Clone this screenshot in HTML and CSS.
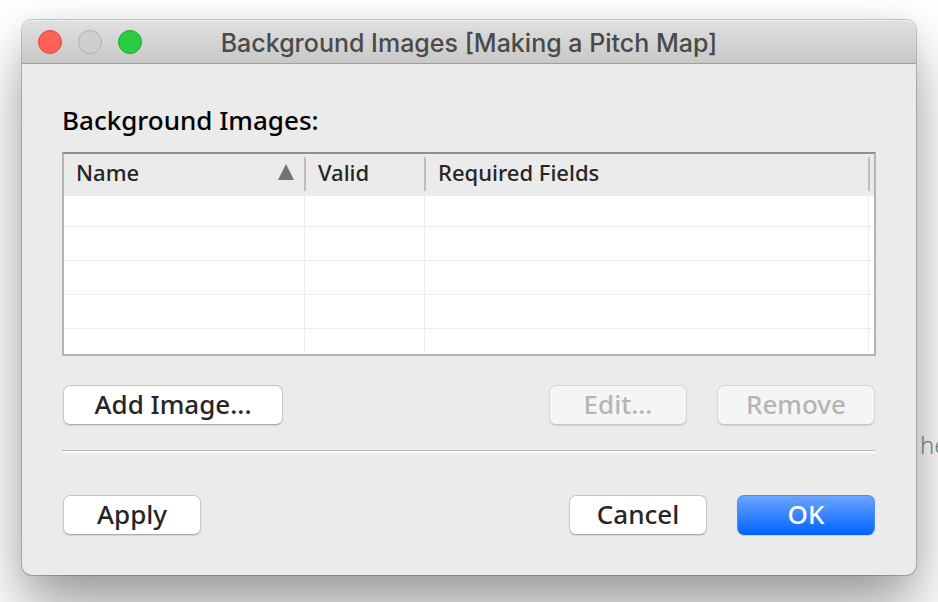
FILE: index.html
```html
<!DOCTYPE html>
<html lang="en">
<head>
    <meta charset="UTF-8">
    <meta name="viewport" content="width=device-width, initial-scale=1.0">
    <title>Background Images [Making a Pitch Map]</title>
    <link rel="stylesheet" href="styles.css">
</head>
<body>
    <div class="behind">he</div>
    <main class="window">
        <header class="titlebar">
            <div class="lights">
                <button class="light close" aria-label="Close"></button>
                <button class="light minimize" aria-label="Minimize" disabled></button>
                <button class="light zoom" aria-label="Zoom"></button>
            </div>
            <h1>Background Images [Making a Pitch Map]</h1>
        </header>
        <div class="content">
            <h2 id="images-label">Background Images:</h2>
            <table class="images" aria-labelledby="images-label">
                <colgroup>
                    <col class="col-name">
                    <col class="col-valid">
                    <col>
                    <col class="col-end">
                </colgroup>
                <thead>
                    <tr>
                        <th aria-sort="ascending">
                            <div class="head">Name
                                <svg class="sort" width="16" height="16" viewBox="0 0 16 16"><path d="M8 0L16 16H0Z" fill="#737373"/></svg>
                            </div>
                        </th>
                        <th><div class="head">Valid</div></th>
                        <th><div class="head">Required Fields</div></th>
                        <td><div class="head"></div></td>
                    </tr>
                </thead>
                <tbody>
                    <tr><td></td><td></td><td></td><td></td></tr>
                    <tr><td></td><td></td><td></td><td></td></tr>
                    <tr><td></td><td></td><td></td><td></td></tr>
                    <tr><td></td><td></td><td></td><td></td></tr>
                    <tr><td></td><td></td><td></td><td></td></tr>
                </tbody>
            </table>
            <div class="buttons">
                <button class="btn wide">Add Image...</button>
                <button class="btn push" disabled>Edit...</button>
                <button class="btn medium" disabled>Remove</button>
            </div>
            <hr>
            <div class="buttons">
                <button class="btn">Apply</button>
                <button class="btn push">Cancel</button>
                <button class="btn primary">OK</button>
            </div>
        </div>
    </main>
</body>
</html>
```
FILE: styles.css
```css
* {
    box-sizing: border-box;
}

body {
    min-height: 100vh;
    margin: 0;
    padding: 20px 22px;
    background-color: #ffffff;
    font-family: "Noto Sans", sans-serif;
    color: #262626;
    position: relative;
    overflow: hidden;
}

/* text of the document under the dialog */
.behind {
    position: absolute;
    top: 429px;
    left: calc(100% - 18px);
    font-size: 24px;
    font-weight: 300;
    line-height: 32px;
    color: #888888;
}

.window {
    position: relative;
    border-radius: 10px;
    background-color: #ebebeb;
    box-shadow: 0 0 0 1px rgba(0, 0, 0, 0.2), 0 0 24px rgba(0, 0, 0, 0.06), 0 34px 60px rgba(0, 0, 0, 0.38);
}

.titlebar {
    display: grid;
    grid-template-columns: 120px 1fr 120px;
    align-items: center;
    height: 44px;
    padding: 0 16px;
    border-bottom: 1px solid #a0a0a0;
    border-radius: 10px 10px 0 0;
    background: linear-gradient(#e0e0e0, #c8c8c8);
    box-shadow: inset 0 1px 0 #f2f2f2;
}

.lights {
    display: flex;
    gap: 16px;
}

.light {
    width: 24px;
    height: 24px;
    padding: 0;
    border: 1px solid #b0b0b0;
    border-radius: 50%;
    background-color: #cfcfcf;
}

.close {
    border-color: #e2463f;
    background-color: #ff6159;
}

.zoom {
    border-color: #1aab29;
    background-color: #28cd41;
}

h1 {
    margin: 0;
    padding-top: 2px;
    font-family: Inter, sans-serif;
    font-size: 25px;
    font-weight: 500;
    line-height: 32px;
    text-align: center;
    white-space: nowrap;
    color: #4a4a4a;
}

.content {
    padding: 40px;
}

h2 {
    margin: 0 0 16px;
    font-size: 26px;
    font-weight: 500;
    line-height: 32px;
    color: #000000;
}

.images {
    width: 100%;
    border: 2px solid #b4b4b4;
    border-top-color: #8e8e8e;
    border-spacing: 0;
    table-layout: fixed;
    background-color: #ffffff;
}

.col-name {
    width: 240px;
}

.col-valid {
    width: 120px;
}

.col-end {
    width: 6px;
}

.images th,
.images td {
    padding: 0;
    text-align: left;
}

.images thead th,
.images thead td {
    height: 42px;
    padding: 3px 0 5px;
    background-color: #ebebeb;
}

.head {
    display: flex;
    align-items: center;
    justify-content: space-between;
    height: 34px;
    padding: 0 10px 4px 12px;
    font-size: 22px;
    font-weight: 500;
    line-height: 30px;
    border-left: 2px solid #bdbdbd;
}

th:first-child .head {
    border-left: none;
}

.images thead td .head {
    padding: 0;
}

.images tbody td {
    height: 34px;
    border-left: 1px solid #ededed;
    border-bottom: 1px solid #ededed;
}

.images tbody td:first-child {
    border-left: none;
}

.images tbody tr:first-child td {
    height: 31px;
}

.images tbody tr:last-child td {
    height: 25px;
    border-bottom: none;
}

.buttons {
    display: flex;
    gap: 30px;
    padding: 0 1px;
}

.images + .buttons {
    margin-top: 29px;
}

.btn {
    width: 138px;
    height: 40px;
    padding: 0 0 2px;
    border: 1px solid #c6c6c6;
    border-bottom-color: #adadad;
    border-radius: 7px;
    background-color: #ffffff;
    box-shadow: 0 1px 1px rgba(0, 0, 0, 0.1);
    font-family: inherit;
    font-size: 26px;
    font-weight: 500;
    line-height: 36px;
    color: #262626;
}

.btn:disabled {
    border-color: #d6d6d6;
    border-bottom-color: #c8c8c8;
    background-color: #f5f5f5;
    color: #b5b5b5;
}

.wide {
    width: 220px;
}

.medium {
    width: 158px;
}

.push {
    margin-left: auto;
}

.primary {
    border-color: #4a8df5;
    border-bottom-color: #0062f0;
    background: linear-gradient(#6ba5fe, #0265ff);
    color: #ffffff;
}

hr {
    height: 3px;
    margin: 25px 1px 42px 0;
    border: none;
    border-top: 1px solid #b8b8b8;
    background-color: #ffffff;
}
```
